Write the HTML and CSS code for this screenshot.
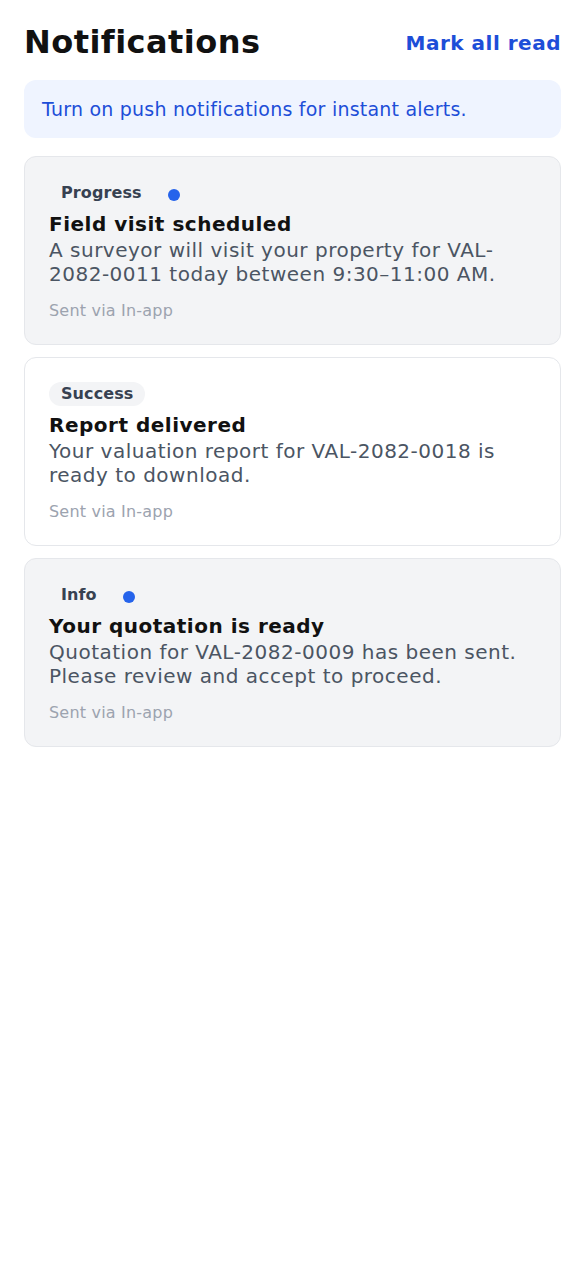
FILE: index.html
```html
<!DOCTYPE html>
<html lang="en">
<head>
<meta charset="utf-8">
<meta name="viewport" content="width=device-width, initial-scale=1">
<title>Notifications</title>
<link rel="stylesheet" href="styles.css">
</head>
<body>
<main class="page">
  <header class="header">
    <h1 class="title">Notifications</h1>
    <button class="mark-read" type="button">Mark all read</button>
  </header>
  <div class="banner">Turn on push notifications for instant alerts.</div>
  <ul class="list">
    <li class="card card-unread">
      <div class="card-top">
        <span class="badge">Progress</span>
        <span class="dot"></span>
      </div>
      <h2 class="card-title">Field visit scheduled</h2>
      <p class="card-body">A surveyor will visit your property for VAL-2082-0011 today between 9:30–11:00 AM.</p>
      <p class="card-meta">Sent via In-app</p>
    </li>
    <li class="card">
      <div class="card-top">
        <span class="badge">Success</span>
      </div>
      <h2 class="card-title">Report delivered</h2>
      <p class="card-body">Your valuation report for VAL-2082-0018 is ready to download.</p>
      <p class="card-meta">Sent via In-app</p>
    </li>
    <li class="card card-unread">
      <div class="card-top">
        <span class="badge">Info</span>
        <span class="dot"></span>
      </div>
      <h2 class="card-title">Your quotation is ready</h2>
      <p class="card-body">Quotation for VAL-2082-0009 has been sent. Please review and accept to proceed.</p>
      <p class="card-meta">Sent via In-app</p>
    </li>
  </ul>
</main>
</body>
</html>
```
FILE: styles.css
```css
* {
  box-sizing: border-box;
}

html, body {
  margin: 0;
  padding: 0;
  background: #ffffff;
}

body {
  font-family: "DejaVu Sans", "Noto Sans", sans-serif;
  color: #111827;
}

.page {
  padding: 24px;
  display: flex;
  flex-direction: column;
}

.header {
  display: flex;
  align-items: center;
  justify-content: space-between;
  margin-bottom: 19px;
}

.title {
  margin: 0;
  font-size: 32px;
  font-weight: 700;
  letter-spacing: 0.45px;
  color: #111111;
  line-height: 37px;
}

.mark-read {
  border: 0;
  background: none;
  padding: 0;
  font-family: inherit;
  font-size: 20px;
  font-weight: 700;
  letter-spacing: 0.5px;
  color: #1d4ed8;
  cursor: pointer;
}

.banner {
  background: #eff4ff;
  color: #1d4ed8;
  border-radius: 12px;
  padding: 16px 18px;
  font-size: 19px;
  letter-spacing: 0.22px;
  line-height: 26px;
  margin-bottom: 18px;
}

.list {
  list-style: none;
  margin: 0;
  padding: 0;
  display: flex;
  flex-direction: column;
  gap: 12px;
}

.card {
  background: #ffffff;
  border: 1px solid #e5e7eb;
  border-radius: 12px;
  padding: 24px;
  display: flex;
  flex-direction: column;
}

.card-unread {
  background: #f3f4f6;
}

.card-top {
  display: flex;
  align-items: center;
  gap: 14px;
  height: 24px;
}

.badge {
  display: inline-block;
  background: #f3f4f6;
  color: #374151;
  font-size: 16px;
  font-weight: 700;
  letter-spacing: 0.1px;
  line-height: 24px;
  padding: 0 12px;
  border-radius: 12px;
}

.dot {
  width: 12px;
  height: 12px;
  border-radius: 50%;
  background: #2563eb;
  margin-top: 4px;
}

.card-title {
  margin: 7px 0 0;
  font-size: 20px;
  font-weight: 700;
  letter-spacing: 0.5px;
  line-height: normal;
  color: #111111;
}

.card-body {
  margin: 2px 0 0;
  font-size: 20px;
  letter-spacing: 0.5px;
  line-height: normal;
  color: #4b5563;
}

.card-meta {
  margin: 15px 0 0;
  font-size: 16px;
  letter-spacing: 0.2px;
  line-height: 19px;
  color: #9ca3af;
}
```
